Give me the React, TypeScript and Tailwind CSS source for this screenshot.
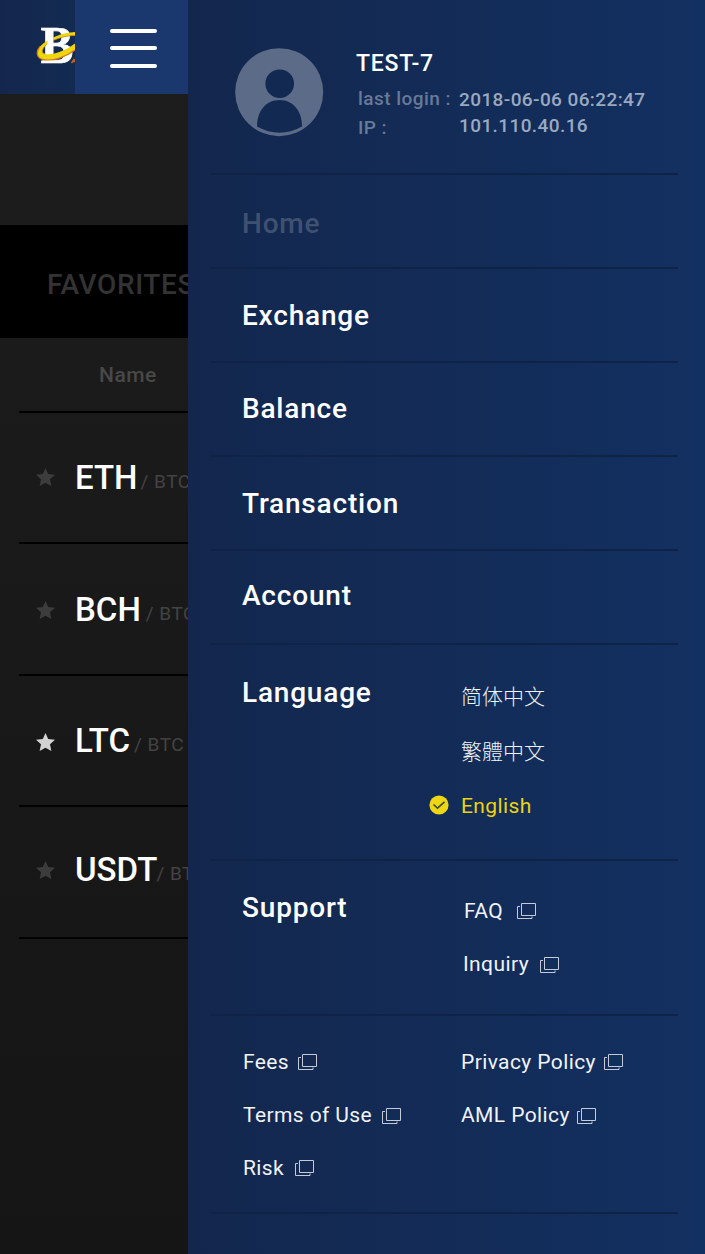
import { clsx } from 'clsx';

interface NavItem {
  label: string;
  className: string;
}

interface Coin {
  symbol: string;
  favorite: boolean;
  rowClass: string;
  starClass: string;
  pairClass: string;
}

const navItems: NavItem[] = [
  { label: 'Home', className: 'pt-[35px] text-white/20' },
  { label: 'Exchange', className: 'pt-[33px] text-white' },
  { label: 'Balance', className: 'pt-8 text-white' },
  { label: 'Transaction', className: 'pt-[33px] text-white' },
  { label: 'Account', className: 'pt-[31px] text-white' },
];

const coins: Coin[] = [
  { symbol: 'ETH', favorite: false, rowClass: 'h-[131px] pt-12', starClass: 'mt-[7px]', pairClass: 'ml-[3px]' },
  { symbol: 'BCH', favorite: false, rowClass: 'h-[132px] pt-[49px]', starClass: 'mt-2', pairClass: 'ml-[5px]' },
  { symbol: 'LTC', favorite: true, rowClass: 'h-[131px] pt-12', starClass: 'mt-[9px]', pairClass: 'ml-1' },
  { symbol: 'USDT', favorite: false, rowClass: 'h-[132px] pt-[46px]', starClass: 'mt-2', pairClass: '-ml-px' },
];

function Logo() {
  return (
    <svg width="39" height="44" viewBox="0 0 39 44" className="shrink-0">
      <text
        x="4.500"
        y="38.500"
        fill="#fff"
        stroke="#fff"
        strokeWidth="0.600"
        fontFamily="Liberation Serif, serif"
        fontWeight="700"
        fontSize="52"
        textLength="33"
        lengthAdjust="spacingAndGlyphs"
      >
        B
      </text>
      <path
        d="M39 8C27 8.500 12 14 4 22.500C-0.500 28 0.500 34 7 35.500C17 37.500 30 33 39 26V19.500C29 27 17 31.500 9 30C5 29 6 25.500 9 22C15 16 28 11.500 39 11.500Z"
        fill="#eed60f"
      />
      <path d="M39 11.500C28 11.500 15 16 9 22C6 25.500 5 29 9 30" fill="none" stroke="#c98a1c" strokeWidth="0.800" />
      <path
        d="M4 22.500C-0.500 28 0.500 34 7 35.500C17 37.500 30 33 39 26"
        fill="none"
        stroke="#d9791a"
        strokeWidth="1.200"
      />
      <path d="M11.500 9H17V27.500L11.500 28.500Z" fill="#fff" />
      <path d="M35.500 39L38 35.500L39 36.500M37 37.500H39" fill="none" stroke="#c9651b" strokeWidth="1.500" />
    </svg>
  );
}

function Star({ className }: { className?: string }) {
  return (
    <svg width="19" height="18" viewBox="0 0 19 18" className={clsx('shrink-0', className)}>
      <path
        fill="currentColor"
        d="M9.500 0L12.200 6L19 6.800L14 11.300L15.400 18L9.500 14.700L3.600 18L5 11.300L0 6.800L6.800 6Z"
      />
    </svg>
  );
}

function Avatar() {
  return (
    <svg width="89" height="89" viewBox="0 0 89 89" className="shrink-0">
      <circle cx="44.200" cy="44.200" r="44" fill="#5c6b88" />
      <circle cx="44.700" cy="35.700" r="14.300" fill="#122a52" />
      <path
        d="M22 78.500C22 63 31 52 44.500 52S67 63 67 78.500Q44.500 91 22 78.500Z"
        fill="#122a52"
      />
    </svg>
  );
}

function WindowsIcon({ className }: { className?: string }) {
  return (
    <svg
      width="19"
      height="16"
      viewBox="0 0 19 16"
      fill="none"
      stroke="#c3cbd9"
      strokeWidth="1"
      className={clsx('shrink-0', className)}
    >
      <path d="M4.500 .5H18.500V12.500H4.500Z" />
      <path d="M3 3.500H.5V15.500H15V13.500" />
    </svg>
  );
}

function ExternalLink({ label, className, iconClass }: { label: string; className?: string; iconClass: string }) {
  return (
    <a className={clsx('flex h-[21px] items-start whitespace-nowrap', className)}>
      <span className="text-[21px] leading-[21px] tracking-[0.4px] text-[#f1f3f7]">{label}</span>
      <WindowsIcon className={iconClass} />
    </a>
  );
}

function MarketList() {
  return (
    <div className="flex w-[188px] shrink-0 flex-col overflow-hidden bg-linear-to-b from-[#1d1d1d] to-[#151515]">
      <header className="flex h-[94px]">
        <div className="flex w-[75px] shrink-0 overflow-hidden bg-linear-to-r from-[#14264d] to-[#132b50] pt-6 pl-9">
          <Logo />
        </div>
        <button className="flex w-[113px] flex-col items-center bg-[#1b386e] pt-[29px] pl-1">
          <span className="h-1 w-[47px] rounded-full bg-white" />
          <span className="mt-[13px] h-1 w-[47px] rounded-full bg-white" />
          <span className="mt-3.5 h-1 w-[47px] rounded-full bg-white" />
        </button>
      </header>
      <div className="mt-[131px] h-[113px] bg-black pt-[46px] pl-[47px] text-[28px] leading-7 font-medium tracking-[0.6px] whitespace-nowrap text-[#333]">
        FAVORITES
      </div>
      <div className="ml-[19px] h-[75px] border-b-2 border-black pt-[27px] pl-20 text-[21px] leading-[21px] font-medium tracking-[0.5px] text-[#484848]">
        Name
      </div>
      {coins.map((coin) => (
        <div
          key={coin.symbol}
          className={clsx('ml-[19px] flex items-start border-b-2 border-black pl-[17px] whitespace-nowrap', coin.rowClass)}
        >
          <Star className={clsx(coin.starClass, coin.favorite ? 'text-[#d2d2d2]' : 'text-[#3c3c3c]')} />
          <span className="ml-5 text-[33px] leading-[33px] font-medium text-white">{coin.symbol}</span>
          <span className={clsx('mt-[11px] text-[19px] leading-5 tracking-[0.5px] text-[#434343]', coin.pairClass)}>
            / BTC
          </span>
        </div>
      ))}
    </div>
  );
}

function Profile() {
  return (
    <div className="flex h-[175px] border-b-2 border-[#0f2347] pt-[48px] pl-[25px]">
      <Avatar />
      <div className="ml-8 pt-1">
        <h2 className="text-[23px] leading-[23px] font-medium tracking-[0.8px] text-white">TEST-7</h2>
        <div className="mt-[9px] flex text-[19px] font-medium whitespace-nowrap">
          <div className="w-[103px] pl-0.5 text-[#68799a]">
            <p className="leading-[29px] tracking-[0.45px]">last login :</p>
            <p className="leading-[29px] tracking-[0.45px]">IP :</p>
          </div>
          <div className="pt-0.5 tracking-[0.4px] text-[#9ba9c0]">
            <p className="leading-[27px]">2018-06-06 06:22:47</p>
            <p className="leading-[26px]">101.110.40.16</p>
          </div>
        </div>
      </div>
    </div>
  );
}

function Drawer() {
  return (
    <nav className="w-[517px] bg-linear-to-r from-[#13274d] to-[#123061] pr-[27px] pl-[22px]">
      <Profile />
      {navItems.map((item) => (
        <div
          key={item.label}
          className={clsx(
            'h-[94px] border-b-2 border-[#0f2347] pl-8 text-[28px] leading-7 font-medium tracking-[0.8px]',
            item.className,
          )}
        >
          {item.label}
        </div>
      ))}

      <div className="flex h-[216px] border-b-2 border-[#0f2347] pl-8">
        <h3 className="w-[187px] pt-[34px] text-[28px] leading-7 font-medium tracking-[0.8px] text-white">Language</h3>
        <div className="pt-10 pl-8 text-[21px] leading-[21px] text-[#f1f3f7]">
          <p className="font-['Noto_Sans_CJK_SC',sans-serif] font-light">简体中文</p>
          <p className="mt-[34px] font-['Noto_Sans_CJK_TC',sans-serif] font-light">繁體中文</p>
          <div className="mt-[34px] -ml-8 flex items-start text-[#e9d512]">
            <svg width="20" height="20" viewBox="0 0 20 20" className="mr-3">
              <circle cx="10" cy="10" r="9.600" fill="#edd613" />
              <path d="M4.500 9.500L8.500 13.200L15.500 6.800" fill="none" stroke="#3d4a40" strokeWidth="1.600" />
            </svg>
            <span className="mt-px tracking-[0.4px]">English</span>
          </div>
        </div>
      </div>

      <div className="flex h-[155px] border-b-2 border-[#0f2347] pl-8">
        <h3 className="w-[221px] pt-[33px] text-[28px] leading-7 font-medium tracking-[0.8px] text-white">Support</h3>
        <div className="pt-10">
          <ExternalLink label="FAQ" className="pl-px" iconClass="ml-3.5 mt-0.5" />
          <ExternalLink label="Inquiry" className="mt-8" iconClass="ml-[11px] mt-[3px]" />
        </div>
      </div>

      <div className="flex h-[198px] border-b-2 border-[#0f2347] pt-9 pl-[33px]">
        <div className="w-[218px]">
          <ExternalLink label="Fees" iconClass="ml-[9px] mt-0.5" />
          <ExternalLink label="Terms of Use" className="mt-8" iconClass="ml-2.5 mt-[3px]" />
          <ExternalLink label="Risk" className="mt-8" iconClass="ml-[11px] mt-0.5" />
        </div>
        <div>
          <ExternalLink label="Privacy Policy" iconClass="ml-2 mt-0.5" />
          <ExternalLink label="AML Policy" className="mt-8" iconClass="ml-[7px] mt-[3px]" />
        </div>
      </div>
    </nav>
  );
}

export default function App() {
  return (
    <div className="flex h-[1254px] w-[705px] overflow-hidden bg-[#171717] font-[Roboto,sans-serif]">
      <MarketList />
      <Drawer />
    </div>
  );
}
